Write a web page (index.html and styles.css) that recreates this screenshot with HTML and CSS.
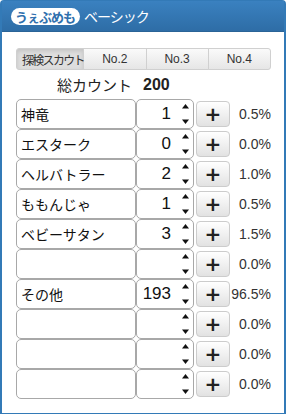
FILE: index.html
```html
<!DOCTYPE html>
<html lang="ja">
<head>
    <meta charset="UTF-8">
    <meta name="viewport" content="width=device-width, initial-scale=1.0">
    <title>うぇぶめも ベーシック</title>
    <link rel="stylesheet" href="styles.css">
</head>
<body>

    <div class="panel">
        <div class="panel-heading">
            <span class="logo">うぇぶめも</span>
            <span class="title">ベーシック</span>
        </div>

        <div class="panel-body">
            <div class="tabs">
                <button class="tab active">探検スカウト</button>
                <button class="tab">No.2</button>
                <button class="tab">No.3</button>
                <button class="tab">No.4</button>
            </div>

            <div class="total">
                <span class="total-label">総カウント</span>
                <span class="total-value" id="total">200</span>
            </div>

            <div id="rows"></div>
        </div>
    </div>

    <script>
        const items = [
            { name: "神竜", count: 1 },
            { name: "エスターク", count: 0 },
            { name: "ヘルバトラー", count: 2 },
            { name: "ももんじゃ", count: 1 },
            { name: "ベビーサタン", count: 3 },
            { name: "", count: null },
            { name: "その他", count: 193 },
            { name: "", count: null },
            { name: "", count: null },
            { name: "", count: null }
        ];

        const spinner = '<svg class="spin" width="9" height="24" viewBox="0 0 9 24">' +
            '<path d="M4.5 2 L8 6.5 L1 6.5 Z" fill="#111"/>' +
            '<path d="M4.5 22 L8 17.5 L1 17.5 Z" fill="#111"/></svg>';

        function render() {
            const total = items.reduce((s, it) => s + (it.count || 0), 0);
            document.getElementById("total").textContent = total;
            const rows = document.getElementById("rows");
            rows.innerHTML = "";
            items.forEach((it) => {
                const pct = total ? ((it.count || 0) / total * 100).toFixed(1) : "0.0";
                const row = document.createElement("div");
                row.className = "row";
                row.innerHTML =
                    '<input type="text" class="name-input" value="' + it.name + '">' +
                    '<div class="count-box"><span class="count">' + (it.count === null ? "" : it.count) + '</span>' + spinner + '</div>' +
                    '<button class="plus">+</button>' +
                    '<span class="pct">' + pct + '%</span>';
                row.querySelector(".plus").addEventListener("click", () => {
                    it.count = (it.count || 0) + 1;
                    render();
                });
                rows.appendChild(row);
            });
        }

        render();
    </script>
</body>
</html>
```

FILE: styles.css
```css
body {
    margin: 0;
    font-family: "Liberation Sans", "Noto Sans CJK JP", sans-serif;
    color: #111;
    background-color: #fff;
}

.panel {
    width: 286px;
    height: 414px;
    box-sizing: border-box;
    border: 1px solid #337ab7;
    border-left-width: 2px;
    border-right-width: 2px;
    border-radius: 4px 4px 0 0;
}

.panel-heading {
    height: 31px;
    box-sizing: border-box;
    padding: 0 0 0 9px;
    display: flex;
    align-items: center;
    background-image: linear-gradient(#3a81c0, #2e6da6);
    border-bottom: 1px solid #2a6497;
}

.logo {
    background-color: #fff;
    color: #2f70ae;
    font-family: "Noto Sans CJK JP", sans-serif;
    font-weight: bold;
    font-size: 13px;
    letter-spacing: -1px;
    line-height: 17px;
    padding: 0 5px 0 4px;
    border-radius: 9px;
}

.title {
    color: #fff;
    font-family: "Noto Sans CJK JP", sans-serif;
    font-size: 14px;
    letter-spacing: -1px;
    margin-left: 4px;
}

.panel-body {
    padding: 16px 13px 0 14px;
}

.tabs {
    display: flex;
    height: 22px;
}

.tab {
    flex: 1;
    min-width: 0;
    height: 22px;
    padding: 0;
    font-family: "Liberation Sans", "Noto Sans CJK JP", sans-serif;
    font-size: 12px;
    color: #333;
    border: 1px solid #d0d0d0;
    margin-left: -1px;
    background-image: linear-gradient(#fafafa, #e6e6e6);
    position: relative;
}

.tab:first-child {
    margin-left: 0;
    border-radius: 3px 0 0 3px;
}

.tab:last-child {
    border-radius: 0 3px 3px 0;
}

.tab.active {
    background-image: none;
    background-color: #dedede;
    box-shadow: inset 0 2px 4px rgba(0, 0, 0, 0.12);
    text-align: left;
    padding-left: 5px;
    white-space: nowrap;
    overflow: visible;
    font-family: "Noto Sans CJK JP", sans-serif;
    font-size: 12px;
    letter-spacing: -1.7px;
    z-index: 1;
}

.total {
    display: flex;
    align-items: center;
    height: 29px;
}

.total-label {
    width: 116px;
    text-align: right;
    font-family: "Noto Sans CJK JP", sans-serif;
    font-size: 15px;
    font-weight: normal;
    color: #222;
}

.total-value {
    margin-left: 11px;
    font-size: 16px;
    font-weight: bold;
    color: #222;
}

.row {
    display: flex;
    height: 30px;
    align-items: flex-start;
}

.name-input {
    width: 120px;
    height: 30px;
    box-sizing: border-box;
    border: 1px solid #a8a8a8;
    border-radius: 5px;
    padding: 0 4px;
    font-family: "Noto Sans CJK JP", sans-serif;
    font-size: 14px;
    color: #111;
    margin: 0;
}

.count-box {
    width: 58px;
    height: 30px;
    box-sizing: border-box;
    border: 1px solid #a8a8a8;
    border-radius: 5px;
    display: flex;
    align-items: center;
    justify-content: flex-end;
    padding-right: 3px;
}

.count {
    font-size: 17px;
    margin-right: 10px;
}

.spin {
    display: block;
}

.plus {
    width: 34px;
    height: 26px;
    margin: 2px 0 0 2px;
    padding: 0;
    border: 1px solid #ccc;
    border-radius: 4px;
    background-image: linear-gradient(#fff, #e2e2e2);
    font-family: "DejaVu Sans", sans-serif;
    font-weight: bold;
    font-size: 20px;
    line-height: 22px;
    color: #222;
    cursor: pointer;
}

.pct {
    flex: 1;
    text-align: right;
    font-size: 14px;
    line-height: 30px;
    color: #333;
}
```
